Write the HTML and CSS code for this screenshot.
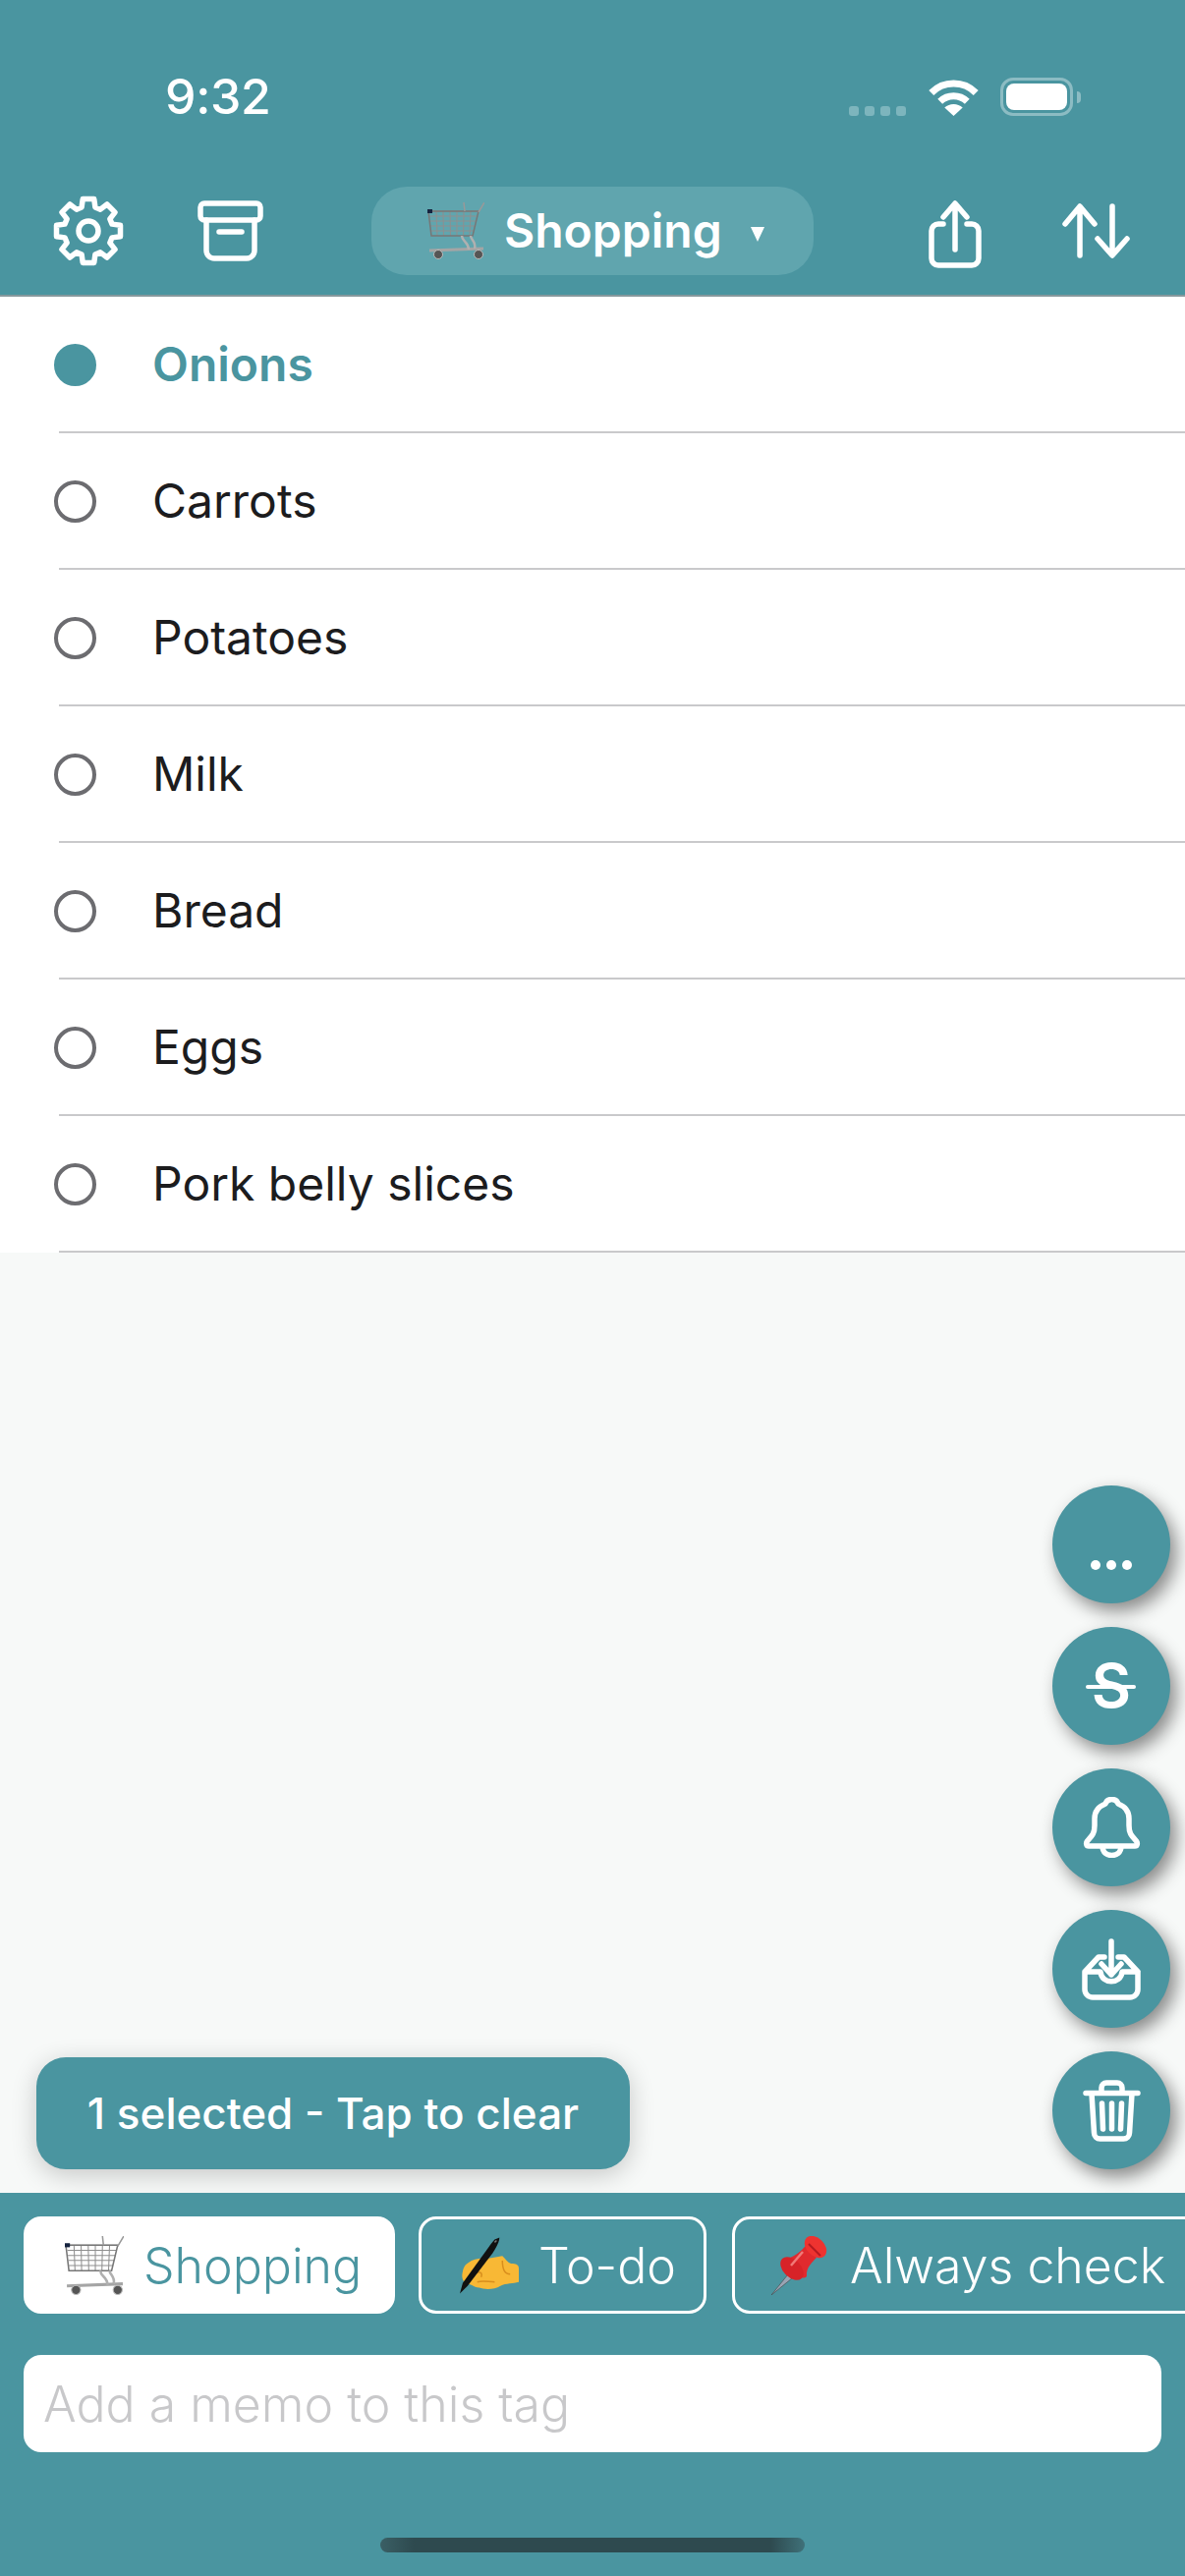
FILE: index.html
```html
<!DOCTYPE html>
<html lang="en">
<head>
<meta charset="utf-8">
<title>Shopping</title>
<link rel="stylesheet" href="styles.css">
</head>
<body>
<svg class="defs" width="0" height="0" aria-hidden="true">
  <symbol id="cart" viewBox="0 0 58 58">
    <g fill="none" stroke="#8f8f8f" stroke-width="1">
      <path d="M2 9H52M2.500 14H50.500M3 19H49.500M3.500 24H48.500M4 29H47.500M9 9L10 34M16 9L16.500 34M23 9L23.500 34M30 9V34M37 9L36.500 34M44 9L43 34"/>
    </g>
    <path d="M1 9H52L46 34H4Z" fill="none" stroke="#777" stroke-width="1.500"/>
    <path d="M52 10L58 0M37 0L38 9" fill="none" stroke="#999" stroke-width="1.500"/>
    <path d="M2 49L57 47" stroke="#a5a5a5" stroke-width="3" fill="none"/>
    <path d="M35 34C35 40 42 40 42 48M44 34C44 38 50 40 48 47" stroke="#b0b0b0" stroke-width="2.500" fill="none"/>
    <rect x="0" y="7" width="5" height="4" fill="#15233f"/>
    <circle cx="11" cy="53" r="4.500" fill="#555" stroke="#bbb"/>
    <circle cx="52" cy="53" r="4.500" fill="#555" stroke="#bbb"/>
  </symbol>
  <symbol id="hand" viewBox="0 0 61 58">
    <path d="M9 26C14 22 22 21 28 22L44 19C47 22 50 26 53 27C58 27 61 28 61 32V46C55 48 48 47 42 50C36 54 26 54 20 52C14 51 11 48 9 48C4 48 1 42 3 35C4 30 6 28 9 26Z" fill="#f8b835"/>
    <path d="M14 38C20 34 24 36 22 41M18 46C24 44 30 46 36 46M44 24C44 32 46 38 52 38" fill="none" stroke="#d88e1d" stroke-width="1.500"/>
    <path d="M36 2L41 0C41 4 38 10 34 16L8 50L0 58L3 47L32 7Z" fill="#111"/>
    <path d="M36 5L38 3" stroke="#777" stroke-width="1.500"/>
  </symbol>
  <symbol id="pin" viewBox="0 0 60 60">
    <path d="M0 60L17 39L21 43Z" fill="#9aa4b4" stroke="#444" stroke-width=".6"/>
    <path d="M14 22C22 24 31 14 35 10L46 22C42 26 35 32 36 41C33 44 31 42 28 41C20 40 12 33 12 26Z" fill="#e02a2e"/>
    <ellipse cx="21" cy="33" rx="14" ry="9" transform="rotate(45 21 33)" fill="#d72328"/>
    <ellipse cx="45" cy="11" rx="13" ry="9" transform="rotate(45 45 11)" fill="#ee3330"/>
    <path d="M38 8L50 20" stroke="#b41a20" stroke-width="2"/>
    <path d="M20 30L32 16" stroke="#f07a78" stroke-width="2.500"/>
  </symbol>
</svg>

<main class="app">
  <header class="topbar">
    <div class="status">
      <span class="clock">9:32</span>
      <div class="status-icons">
        <div class="signal"><i></i><i></i><i></i><i></i></div>
        <svg class="wifi" viewBox="0 0 51 37"><path d="M2.800 13.500A32 32 0 0 1 48.200 13.500M11.700 22.300A20 20 0 0 1 39.300 22.300" fill="none" stroke="#fff" stroke-width="7"/><path d="M25.500 37L16.300 28.500A13.500 13.500 0 0 1 34.700 28.500Z" fill="#fff"/></svg>
        <div class="battery"><div class="battery-level"></div></div>
        <div class="battery-nub"></div>
      </div>
    </div>
    <nav class="toolbar">
      <svg class="ic-gear" viewBox="-36 -36 72 72"><path d="M-5.730 -32.500L5.730 -32.500L6.890 -24.030L12.120 -21.870L18.930 -27.030L27.030 -18.930L21.870 -12.120L24.030 -6.890L32.500 -5.730L32.500 5.730L24.030 6.890L21.870 12.120L27.030 18.930L18.930 27.030L12.120 21.870L6.890 24.030L5.730 32.500L-5.730 32.500L-6.890 24.030L-12.120 21.870L-18.930 27.030L-27.030 18.930L-21.870 12.120L-24.030 6.890L-32.500 5.730L-32.500 -5.730L-24.030 -6.890L-21.870 -12.120L-27.030 -18.930L-18.930 -27.030L-12.120 -21.870L-6.890 -24.030Z" class="line"/><circle r="10" class="line"/></svg>
      <svg class="ic-archive" viewBox="0 0 67 62"><rect x="3" y="3" width="61" height="17" rx="4" class="line"/><path d="M9 20V51a8 8 0 0 0 8 8H50a8 8 0 0 0 8-8V20M22 32H45" class="line"/></svg>
      <button class="picker">
        <svg class="emoji"><use href="#cart"/></svg>
        <span class="picker-label">Shopping</span>
        <span class="caret"></span>
      </button>
      <svg class="ic-share" viewBox="0 0 54 69"><path d="M15 24H10a7 7 0 0 0-7 7V59a7 7 0 0 0 7 7H44a7 7 0 0 0 7-7V31a7 7 0 0 0-7-7H39M27 50V4M15 17L27 3L39 17" class="line"/></svg>
      <svg class="ic-sort" viewBox="0 0 69 56"><path d="M18 53V4M3 21L18 3L33 21M51 3V52M36 36L51 53L66 36" class="line"/></svg>
    </nav>
  </header>

  <ul class="list">
    <li class="row row-selected"><span class="radio"></span><span class="row-text">Onions</span></li>
    <li class="row"><span class="radio"></span><span class="row-text">Carrots</span></li>
    <li class="row"><span class="radio"></span><span class="row-text">Potatoes</span></li>
    <li class="row"><span class="radio"></span><span class="row-text">Milk</span></li>
    <li class="row"><span class="radio"></span><span class="row-text">Bread</span></li>
    <li class="row"><span class="radio"></span><span class="row-text">Eggs</span></li>
    <li class="row"><span class="radio"></span><span class="row-text">Pork belly slices</span></li>
  </ul>

  <section class="canvas">
    <button class="toast">1 selected - Tap to clear</button>
    <div class="fabs">
      <button class="fab"><svg class="fab-dots" viewBox="0 0 42 10"><circle cx="5" cy="5" r="5"/><circle cx="21" cy="5" r="5"/><circle cx="37" cy="5" r="5"/></svg></button>
      <button class="fab fab-strike"><span class="strike-s">S</span></button>
      <button class="fab"><svg class="ic-bell" viewBox="0 0 59 62"><path d="M4.500 45C10 39 12 37 12 29V22C12 13 18 9 23 7C24 3.500 27 2.500 29.500 2.500C32 2.500 35 3.500 36 7C41 9 47 13 47 22V29C47 37 49 39 54.500 45C56 47 55.500 50 53 50H6C3.500 50 3 47 4.500 45ZM20 50C20 57 25 59.500 29.500 59.500C34 59.500 39 57 39 50" class="line"/></svg></button>
      <button class="fab"><svg class="ic-inbox" viewBox="0 0 60 63"><path d="M3 34V52a8 8 0 0 0 8 8H49a8 8 0 0 0 8-8V34H41C40 47 20 47 19 34H3L17 19H23M37 19H43L57 34M30 3V37M20 26L30 37L40 26" class="line"/></svg></button>
      <button class="fab"><svg class="ic-trash" viewBox="0 0 59 63"><path d="M19 13V8a5 5 0 0 1 5-5H35a5 5 0 0 1 5 5V13M3 13.500H56M9 14L11.500 54a6 6 0 0 0 6 6H41.500a6 6 0 0 0 6-6L50 14M19.500 24L20.500 50M29.500 24V50M39.500 24L38.500 50" class="line"/></svg></button>
    </div>
  </section>

  <footer class="tagbar">
    <div class="tabs">
      <button class="tab tab-active"><svg class="emoji"><use href="#cart"/></svg><span>Shopping</span></button>
      <button class="tab tab-todo"><svg class="emoji"><use href="#hand"/></svg><span>To-do</span></button>
      <button class="tab tab-always"><svg class="emoji"><use href="#pin"/></svg><span>Always check</span></button>
    </div>
    <div class="memo">Add a memo to this tag</div>
    <div class="home-indicator"></div>
  </footer>
</main>
</body>
</html>
```

FILE: styles.css
```css
* { box-sizing: border-box; }
html, body { margin: 0; padding: 0; }
body { width: 1206px; height: 2622px; overflow: hidden; font-family: Inter, "Noto Sans", sans-serif; background: #f7f9f8; }
button { font: inherit; border: 0; padding: 0; margin: 0; background: none; color: inherit; }
.defs { position: absolute; }
.line { fill: none; stroke: #fff; stroke-width: 5.5; stroke-linecap: round; stroke-linejoin: round; }

.app { display: flex; flex-direction: column; width: 1206px; height: 2622px; }

.topbar { height: 302px; flex: none; background: #4a95a0; color: #fff; border-bottom: 2px solid #86999d; }
.status { display: flex; justify-content: space-between; height: 190px; padding: 72px 0 0 168px; }
.clock { font-size: 50px; line-height: 52px; font-weight: 500; letter-spacing: -0.3px; }
.status-icons { position: relative; display: flex; align-items: flex-end; height: 46px; width: 342px; padding-top: 6px; }
.signal { display: flex; gap: 6px; margin-bottom: 0; width: 81px; }
.signal i { width: 10px; height: 10px; border-radius: 3px; background: #7db5bd; }
.wifi { width: 51px; height: 37px; margin-left: 0; }
.battery { width: 74px; height: 39px; margin-left: 22px; border: 3px solid #8cbcc3; border-radius: 13px; padding: 3px; }
.battery-level { width: 100%; height: 100%; background: #fff; border-radius: 8px; }
.battery-nub { width: 4px; height: 12px; margin: 0 0 13px 4px; background: #8cbcc3; border-radius: 0 4px 4px 0; }

.toolbar { display: flex; align-items: center; height: 90px; padding-left: 54px; }
.ic-gear { width: 72px; height: 72px; flex: none; }
.ic-archive { width: 67px; height: 62px; flex: none; margin-left: 75px; }
.picker { display: flex; align-items: center; width: 450px; height: 90px; flex: none; margin-left: 110px; padding-left: 57px; background: #60a5ae; border-radius: 36px; color: #fff; }
.emoji { width: 58px; height: 58px; flex: none; }
.picker-label { margin-left: 20px; font-size: 48px; line-height: 56px; font-weight: 600; }
.caret { width: 0; height: 0; margin: 6px 0 0 29px; border-left: 7.5px solid transparent; border-right: 7.5px solid transparent; border-top: 15px solid #fff; }
.ic-share { width: 54px; height: 69px; flex: none; margin-left: 117px; margin-top: 6px; }
.ic-sort { width: 69px; height: 56px; flex: none; margin-left: 82px; }

.list { list-style: none; margin: 0; padding: 0; background: #fff; flex: none; }
.row { position: relative; display: flex; align-items: center; height: 139px; padding: 0 0 1px 55px; }
.row::after { content: ""; position: absolute; left: 60px; right: 0; bottom: 0; height: 2px; background: #c9c9cb; }
.radio { width: 43px; height: 43px; flex: none; border: 4px solid #6c6c70; border-radius: 50%; }
.row-text { margin-left: 57px; font-size: 48px; line-height: 58px; color: #1c1c1e; }
.row-selected .radio { background: #4a95a0; border-color: #4a95a0; }
.row-selected .row-text { color: #4a95a0; font-weight: 600; }

.canvas { position: relative; flex: 1; }
.toast { position: absolute; left: 37px; bottom: 24px; width: 604px; height: 114px; background: #4a95a0; border-radius: 30px; color: #fff; font-size: 44px; font-weight: 500; box-shadow: 0 6px 26px rgba(0,0,0,.2); }
.fabs { position: absolute; left: 1071px; bottom: 24px; display: flex; flex-direction: column; gap: 24px; }
.fab { position: relative; display: flex; align-items: center; justify-content: center; width: 120px; height: 120px; background: #4a95a0; border-radius: 50%; color: #fff; box-shadow: 6px 8px 18px rgba(0,0,0,.45); }
.fab-dots { width: 42px; height: 10px; fill: #fff; margin-top: 42px; }
.strike-s { font-size: 62px; line-height: 62px; font-weight: 600; }
.fab-strike::after { content: ""; position: absolute; left: 34px; top: 59px; width: 51px; height: 3.500px; border-radius: 2px; background: #fff; }
.ic-bell { width: 59px; height: 62px; }
.ic-inbox { width: 60px; height: 63px; }
.ic-trash { width: 59px; height: 63px; }

.tagbar { position: relative; flex: none; height: 390px; padding: 24px 0 0 24px; background: #4a95a0; overflow: hidden; }
.tabs { display: flex; height: 99px; width: 1300px; }
.tab { display: flex; align-items: center; height: 99px; flex: none; border: 3.500px solid #fff; border-radius: 18px; color: #fff; font-size: 50px; font-weight: 300; }
.tab span { line-height: 60px; }
.tab .emoji { width: 60px; height: 60px; margin-right: 20px; }
.tab-active { width: 378px; padding-left: 39px; background: #fff; color: #4a95a0; }
.tab-todo { width: 293px; margin-left: 24px; padding-left: 39px; }
.tab-always { width: 480px; margin-left: 26px; padding-left: 37px; }
.memo { display: flex; align-items: center; width: 1158px; height: 99px; margin-top: 42px; padding-left: 20px; background: #fff; border-radius: 18px; color: #c8c8ca; font-size: 50px; font-weight: 300; }
.home-indicator { position: absolute; left: 387px; top: 351px; width: 432px; height: 15px; border-radius: 8px; background: linear-gradient(90deg, #3a5f65, #2e4a4f 8%, #2e4a4f 92%, #3f7179); }
```
